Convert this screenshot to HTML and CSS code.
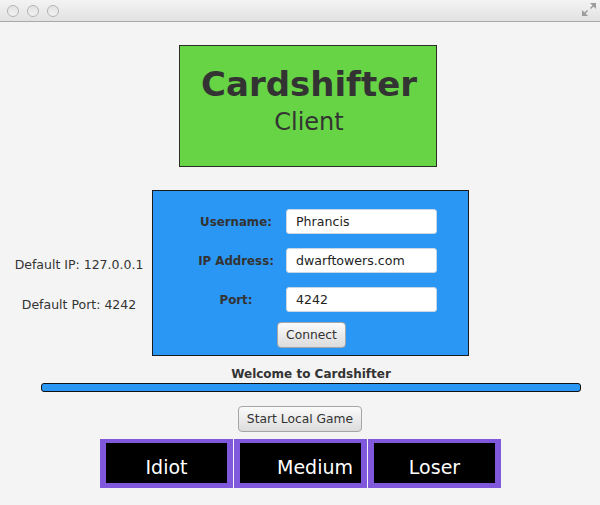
FILE: index.html
```html
<!DOCTYPE html>
<html>
<head>
<meta charset="utf-8">
<link rel="stylesheet" href="styles.css">
</head>
<body>
<div class="titlebar">
  <div class="lights">
    <span class="light"></span><span class="light"></span><span class="light"></span>
  </div>
  <svg class="resize" width="16" height="15" viewBox="0 0 16 15">
    <polygon points="15,1 9,1 15,7" fill="#9c9c9c"/>
    <line x1="13" y1="3" x2="9.5" y2="6.5" stroke="#9c9c9c" stroke-width="1.6"/>
    <polygon points="1,14 1,8 7,14" fill="#9c9c9c"/>
    <line x1="3" y1="12" x2="6.5" y2="8.5" stroke="#9c9c9c" stroke-width="1.6"/>
  </svg>
</div>
<div class="content">
  <div class="logo">
    <div class="logo-title">Cardshifter</div>
    <div class="logo-sub">Client</div>
  </div>
  <div class="middle">
    <div class="defaults">
      <div class="default-line">Default IP: 127.0.0.1</div>
      <div class="default-line port">Default Port: 4242</div>
    </div>
    <div class="login">
      <div class="form">
        <div class="label">Username:</div>
        <div class="field">Phrancis</div>
        <div class="label">IP Address:</div>
        <div class="field">dwarftowers.com</div>
        <div class="label">Port:</div>
        <div class="field">4242</div>
      </div>
      <div class="btn connect">Connect</div>
    </div>
  </div>
  <div class="status">
    <div class="welcome">Welcome to Cardshifter</div>
    <div class="progress"></div>
  </div>
  <div class="btn local">Start Local Game</div>
  <div class="ai-row">
    <div class="ai"><div class="ai-inner">Idiot</div></div>
    <div class="ai"><div class="ai-inner medium">Medium</div></div>
    <div class="ai"><div class="ai-inner">Loser</div></div>
  </div>
</div>
</body>
</html>
```
FILE: styles.css
```css
* { box-sizing: border-box; }
html, body { margin: 0; padding: 0; }
body {
  width: 600px;
  height: 505px;
  background: #f4f4f4;
  font-family: "DejaVu Sans", "Noto Sans", sans-serif;
  color: #333;
  overflow: hidden;
}
.titlebar {
  height: 22px;
  background: linear-gradient(#f3f3f3, #e2e2e2);
  border-bottom: 1px solid #a9a9a9;
  display: flex;
  align-items: center;
  justify-content: space-between;
  padding: 0 3px 0 7px;
}
.lights { display: flex; gap: 8px; }
.light {
  width: 12px;
  height: 12px;
  border-radius: 50%;
  border: 1px solid #b3b3b3;
  background: linear-gradient(#e3e3e3, #f2f2f2);
  display: block;
}
.resize { display: block; margin-top: -2px; }
.content {
  display: flex;
  flex-direction: column;
  align-items: flex-start;
}
.logo {
  margin: 23px 0 0 179px;
  width: 258px;
  height: 122px;
  background: #66d445;
  border: 1px solid #2a2f26;
  display: flex;
  flex-direction: column;
  align-items: center;
  padding-top: 18px;
  padding-left: 2px;
}
.logo-title {
  font-weight: bold;
  font-size: 34px;
  line-height: 40px;
  color: #333;
}
.logo-sub {
  font-size: 24px;
  line-height: 30px;
  color: #333;
  margin-top: 3px;
}
.middle {
  margin-top: 23px;
  display: flex;
}
.defaults {
  width: 152px;
  display: flex;
  flex-direction: column;
  align-items: center;
  padding-top: 67px;
  padding-left: 6px;
  gap: 25px;
  font-size: 12.5px;
  line-height: 15px;
}
.login {
  width: 317px;
  height: 166px;
  background: #2b97f5;
  border: 1px solid #1b1b1b;
  display: flex;
  flex-direction: column;
  align-items: center;
  padding-top: 18px;
}
.form {
  display: grid;
  grid-template-columns: 100px 151px;
  row-gap: 14px;
  align-items: center;
  margin-left: 2px;
}
.label {
  text-align: center;
  font-weight: bold;
  font-size: 11.8px;
  color: #333;
}
.field {
  height: 25px;
  background: #fff;
  border: 1px solid #c9d6e3;
  border-radius: 3px;
  font-size: 12.6px;
  line-height: 23px;
  padding-left: 9px;
  color: #222;
}
.btn {
  height: 26px;
  border: 1px solid #a6a6a6;
  border-radius: 4px;
  background: linear-gradient(#fbfbfb, #dcdcdc);
  font-size: 12.3px;
  line-height: 24px;
  text-align: center;
  color: #333;
}
.connect {
  margin-top: 10px;
  width: 69px;
  margin-left: 2px;
}
.status {
  margin: 11px 0 0 41px;
  width: 540px;
  display: flex;
  flex-direction: column;
  align-items: center;
}
.welcome {
  font-weight: bold;
  font-size: 12px;
  line-height: 15px;
  color: #333;
}
.progress {
  margin-top: 1px;
  width: 540px;
  height: 9px;
  background: #2b97f5;
  border: 1px solid #111;
  border-radius: 3px;
}
.local {
  margin: 14px 0 0 238px;
  width: 124px;
  height: 26px;
}
.ai-row {
  margin: 7px 0 0 100px;
  display: flex;
  gap: 1px;
}
.ai {
  width: 133px;
  height: 49px;
  background: #7f58dc;
  padding: 4px 6px 5px 6px;
}
.ai-inner {
  height: 100%;
  background: #000;
  color: #fff;
  font-size: 19px;
  line-height: 22px;
  text-align: center;
  padding-top: 13px;
}
.ai-inner.medium {
  text-align: right;
  padding-right: 8px;
}
```
